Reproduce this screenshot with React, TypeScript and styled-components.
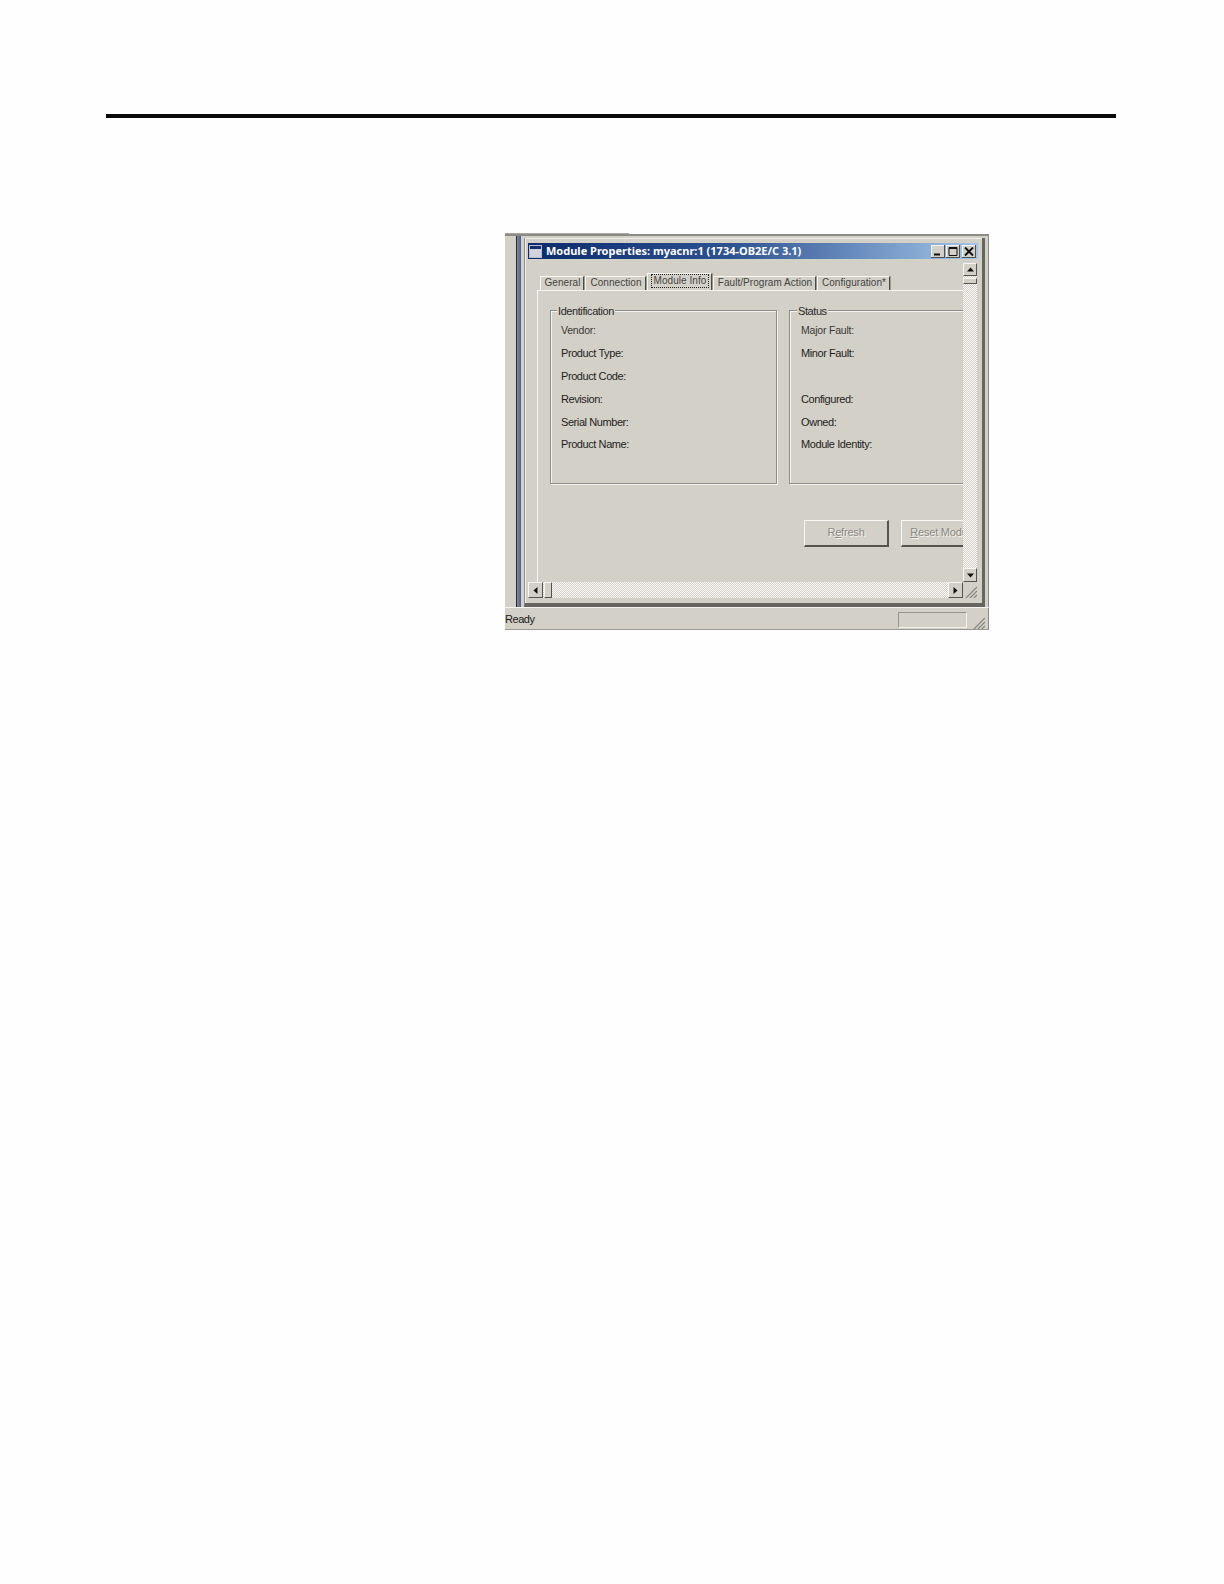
import React from "react";
import styled, { createGlobalStyle } from "styled-components";

const Global = createGlobalStyle`
  html, body { margin: 0; padding: 0; background: #fefefe; }
  body { font-family: "Liberation Sans", Arial, sans-serif; }
`;

const panel = "#d3d0c8";

const Page = styled.div`
  width: 1224px;
  height: 1584px;
  padding-top: 114px;
  box-sizing: border-box;
  overflow: hidden;
`;
const Rule = styled.div`
  height: 4px;
  margin: 0 108px 0 106px;
  background: #0a0a0a;
`;
const Shot = styled.div`
  width: 484px;
  height: 396px;
  margin: 115px 0 0 505px;
  display: flex;
  flex-direction: column;
`;
const TopEdge = styled.div`
  width: 124px;
  height: 1px;
  flex: none;
  background: #a8a7a2;
`;
const Workspace = styled.div`
  height: 373px;
  flex: none;
  box-sizing: border-box;
  display: flex;
  background: ${panel};
  border-top: 2px solid #8b8a85;
  border-right: 1px solid #8b8a85;
  padding-right: 3px;
`;
const Strip = styled.div`
  width: 19px;
  flex: none;
  box-sizing: border-box;
  margin-left: 11px;
  border-left: 1px solid #2b2b2b;
  display: flex;
`;
const StripBlue = styled.div`
  width: 4px;
  background: linear-gradient(90deg, #7f8aa3, #4e5f86);
`;
const Window = styled.div`
  width: 461px;
  height: 369px;
  flex: none;
  margin: 2px 0 0 -11px;
  box-sizing: border-box;
  padding: 5px 5px 5px 4px;
  background: ${panel};
  border-left: 1px solid #8f8e89;
  border-right: 3px solid #66655f;
  border-bottom: 4px solid #66655f;
  box-shadow: inset 1px 1px 0 #f0eeea;
  display: flex;
  flex-direction: column;
`;
const TitleBar = styled.div`
  height: 16px;
  flex: none;
  margin: 0 -1px;
  display: flex;
  align-items: center;
  padding: 0 2px 0 1px;
  background: linear-gradient(90deg, #0c2a6e 0%, #2d5292 45%, #a3c5e8 100%);
`;
const TitleIcon = styled.svg`
  width: 13px;
  height: 13px;
  flex: none;
  margin-right: 4px;
`;
const TitleText = styled.span`
  flex: 1;
  padding-bottom: 2px;
  color: #fff;
  font: bold 11px "Noto Sans", Tahoma, sans-serif;
  white-space: nowrap;
`;
const CaptionButton = styled.div<{ $gap?: number }>`
  width: 14px;
  height: 13px;
  flex: none;
  margin-left: ${(p) => p.$gap ?? 0}px;
  background: ${panel};
  box-shadow: inset -1px -1px 0 #505050, inset 1px 1px 0 #f4f3ef;
  display: flex;
  align-items: center;
  justify-content: center;
`;
const Glyph = styled.svg`
  width: 10px;
  height: 9px;
  display: block;
`;
const Client = styled.div`
  margin: 4px 0 0 -1px;
  height: 335px;
  flex: none;
  display: flex;
  flex-direction: column;
`;
const MainRow = styled.div`
  display: flex;
  height: 319px;
`;
const Viewport = styled.div`
  width: 435px;
  flex: none;
  box-sizing: border-box;
  padding: 10px 0 0 9px;
  overflow: hidden;
`;
const Tabs = styled.div`
  height: 17px;
  display: flex;
  align-items: flex-end;
  padding-left: 3px;
`;
const Tab = styled.div<{ $w: number; $active?: boolean }>`
  width: ${(p) => p.$w}px;
  height: ${(p) => (p.$active ? 17 : 14)}px;
  flex: none;
  box-sizing: border-box;
  margin-right: 1px;
  padding: 0 0 2px 1px;
  border-top: 1px solid #f6f5f2;
  border-left: 1px solid #f6f5f2;
  border-right: 1px solid #4a4a46;
  box-shadow: 1px 0 0 #9a9992;
  display: flex;
  align-items: center;
  justify-content: center;
  color: #44443f;
  font-size: 10px;
  letter-spacing: 0.05px;
  white-space: nowrap;
`;
const FocusLabel = styled.span`
  padding: 0 2px;
  outline: 1px dotted #222;
  line-height: 12px;
`;
const TabPage = styled.div`
  width: 600px;
  height: 292px;
  box-sizing: border-box;
  border-top: 1px solid #f6f5f2;
  border-left: 1px solid #f6f5f2;
  padding: 19px 0 0 12px;
`;
const Groups = styled.div`
  display: flex;
  gap: 12px;
`;
const Group = styled.div<{ $inset: number }>`
  position: relative;
  width: 227px;
  height: 174px;
  flex: none;
  box-sizing: border-box;
  padding: 7px 0 0 ${(p) => p.$inset}px;
  border: 1px solid #8d8c86;
  box-shadow: 1px 1px 0 #f4f3ef, inset 1px 1px 0 #f4f3ef;
`;
const Legend = styled.span<{ $left: number }>`
  position: absolute;
  top: -7px;
  left: ${(p) => p.$left}px;
  padding: 0 1px;
  background: ${panel};
  color: #2a2a28;
  font-size: 11px;
  letter-spacing: -0.42px;
  line-height: 14px;
`;
const Row = styled.div<{ $h?: number }>`
  height: ${(p) => p.$h ?? 23}px;
  display: flex;
  align-items: center;
  color: #1e1e1c;
  font-size: 11px;
  letter-spacing: -0.42px;
  white-space: nowrap;
`;
const SmallRow = styled(Row)`
  font-size: 10.5px;
  letter-spacing: -0.2px;
  color: #3a3a36;
`;
const Buttons = styled.div`
  display: flex;
  gap: 12px;
  margin: 36px 0 0 254px;
`;
const ActionButton = styled.div`
  width: 85px;
  height: 27px;
  flex: none;
  box-sizing: border-box;
  padding-bottom: 2px;
  border-top: 1px solid #f8f7f4;
  border-left: 1px solid #f8f7f4;
  border-right: 2px solid #55544f;
  border-bottom: 2px solid #55544f;
  display: flex;
  align-items: center;
  justify-content: center;
  color: #8a8983;
  font-size: 11px;
  letter-spacing: -0.2px;
  text-shadow: 1px 1px 0 #f4f3ef;
  white-space: nowrap;
`;
const Key = styled.span`
  text-decoration: underline;
`;
const dither = `
  background-color: #ecebe7;
  background-image: conic-gradient(#d3d0c8 25%, #fbfaf8 0 50%, #d3d0c8 0 75%, #fbfaf8 0);
  background-size: 2px 2px;
`;
const VScroll = styled.div`
  width: 14px;
  flex: none;
  display: flex;
  flex-direction: column;
  ${dither}
`;
const ScrollButton = styled.div<{ $w: number; $h: number }>`
  width: ${(p) => p.$w}px;
  height: ${(p) => p.$h}px;
  flex: none;
  box-sizing: border-box;
  background: ${panel};
  border-top: 1px solid #f6f5f2;
  border-left: 1px solid #f6f5f2;
  border-right: 1px solid #55544f;
  border-bottom: 1px solid #55544f;
  display: flex;
  align-items: center;
  justify-content: center;
`;
const VThumb = styled(ScrollButton)`
  margin-top: 2px;
`;
const VSpacer = styled.div`
  flex: 1;
`;
const HRow = styled.div`
  height: 16px;
  display: flex;
`;
const HScroll = styled.div`
  width: 435px;
  flex: none;
  display: flex;
  ${dither}
`;
const HThumb = styled(ScrollButton)`
  margin-left: 1px;
`;
const HSpacer = styled.div`
  flex: 1;
`;
const GripBox = styled.div`
  flex: 1;
  display: flex;
  align-items: flex-end;
  justify-content: flex-end;
`;
const Arrow = styled.svg`
  width: 7px;
  height: 7px;
  display: block;
`;
const Grip = styled.svg`
  width: 12px;
  height: 12px;
  flex: none;
  display: block;
`;
const StatusBar = styled.div`
  height: 23px;
  flex: none;
  box-sizing: border-box;
  background: ${panel};
  border-top: 1px solid #f6f5f2;
  border-right: 1px solid #8b8a85;
  border-bottom: 1px solid #9a9992;
  display: flex;
  align-items: center;
  padding: 1px 3px 0 0;
  color: #1a1a18;
  font-size: 11px;
  letter-spacing: -0.45px;
`;
const StatusText = styled.span`
  flex: 1;
`;
const StatusPanel = styled.div`
  width: 69px;
  height: 16px;
  flex: none;
  box-sizing: border-box;
  margin: 2px 6px 0 0;
  border: 1px solid #96958e;
  border-right-color: #f4f3ef;
  border-bottom-color: #f4f3ef;
`;
const StatusGrip = styled(Grip)`
  align-self: flex-end;
`;

const GripLines = () => (
  <path d="M12 1 L1 12 M12 5 L5 12 M12 9 L9 12" stroke="#85847e" strokeWidth="1.2" fill="none" />
);

const idRows = ["Vendor:", "Product Type:", "Product Code:", "Revision:", "Serial Number:", "Product Name:"];

export default function App() {
  return (
    <Page>
      <Global />
      <Rule />
      <Shot>
        <TopEdge />
        <Workspace>
          <Strip>
            <StripBlue />
          </Strip>
          <Window>
            <TitleBar>
              <TitleIcon viewBox="0 0 13 13">
                <rect x="0.5" y="0.5" width="12" height="12" fill="#d0d2dc" stroke="#b8bccc" />
                <rect x="1" y="1" width="11" height="3" fill="#14306e" />
              </TitleIcon>
              <TitleText>Module Properties: myacnr:1 (1734-OB2E/C 3.1)</TitleText>
              <CaptionButton>
                <Glyph viewBox="0 0 10 9">
                  <rect x="1" y="6.5" width="6" height="2" fill="#111" />
                </Glyph>
              </CaptionButton>
              <CaptionButton $gap={1}>
                <Glyph viewBox="0 0 10 9">
                  <path d="M1 .5h8v8H1z M1 1.5h8" fill="none" stroke="#111" />
                </Glyph>
              </CaptionButton>
              <CaptionButton $gap={2}>
                <Glyph viewBox="0 0 10 9">
                  <path d="M1 .5L9 8.5M9 .5L1 8.5" fill="none" stroke="#111" strokeWidth="2" />
                </Glyph>
              </CaptionButton>
            </TitleBar>
            <Client>
              <MainRow>
                <Viewport>
                  <Tabs>
                    <Tab $w={44}>General</Tab>
                    <Tab $w={61}>Connection</Tab>
                    <Tab $w={65} $active>
                      <FocusLabel>Module Info</FocusLabel>
                    </Tab>
                    <Tab $w={103}>Fault/Program Action</Tab>
                    <Tab $w={73}>Configuration*</Tab>
                  </Tabs>
                  <TabPage>
                    <Groups>
                      <Group $inset={10}>
                        <Legend $left={6}>Identification</Legend>
                        {idRows.map((label, i) =>
                          i === 0 ? (
                            <SmallRow key={label}>{label}</SmallRow>
                          ) : (
                            <Row key={label} $h={i === 5 ? 21 : 23}>
                              {label}
                            </Row>
                          )
                        )}
                      </Group>
                      <Group $inset={11}>
                        <Legend $left={7}>Status</Legend>
                        <SmallRow>Major Fault:</SmallRow>
                        <Row>Minor Fault:</Row>
                        <Row />
                        <Row>Configured:</Row>
                        <Row>Owned:</Row>
                        <Row $h={21}>Module Identity:</Row>
                      </Group>
                    </Groups>
                    <Buttons>
                      <ActionButton>
                        <span>
                          R<Key>e</Key>fresh
                        </span>
                      </ActionButton>
                      <ActionButton>
                        <span>
                          <Key>R</Key>eset Module
                        </span>
                      </ActionButton>
                    </Buttons>
                  </TabPage>
                </Viewport>
                <VScroll>
                  <ScrollButton $w={14} $h={13}>
                    <Arrow viewBox="0 0 7 7">
                      <path d="M3.5 1.5L7 5.5H0z" fill="#111" />
                    </Arrow>
                  </ScrollButton>
                  <VThumb $w={14} $h={6} />
                  <VSpacer />
                  <ScrollButton $w={14} $h={14}>
                    <Arrow viewBox="0 0 7 7">
                      <path d="M0 1.5H7L3.5 5.5z" fill="#111" />
                    </Arrow>
                  </ScrollButton>
                </VScroll>
              </MainRow>
              <HRow>
                <HScroll>
                  <ScrollButton $w={15} $h={16}>
                    <Arrow viewBox="0 0 7 7">
                      <path d="M5.5 0V7L1.5 3.5z" fill="#111" />
                    </Arrow>
                  </ScrollButton>
                  <HThumb $w={8} $h={16} />
                  <HSpacer />
                  <ScrollButton $w={15} $h={16}>
                    <Arrow viewBox="0 0 7 7">
                      <path d="M1.5 0V7L5.5 3.5z" fill="#111" />
                    </Arrow>
                  </ScrollButton>
                </HScroll>
                <GripBox>
                  <Grip viewBox="0 0 12 12">
                    <GripLines />
                  </Grip>
                </GripBox>
              </HRow>
            </Client>
          </Window>
        </Workspace>
        <StatusBar>
          <StatusText>Ready</StatusText>
          <StatusPanel />
          <StatusGrip viewBox="0 0 12 12">
            <GripLines />
          </StatusGrip>
        </StatusBar>
      </Shot>
    </Page>
  );
}
